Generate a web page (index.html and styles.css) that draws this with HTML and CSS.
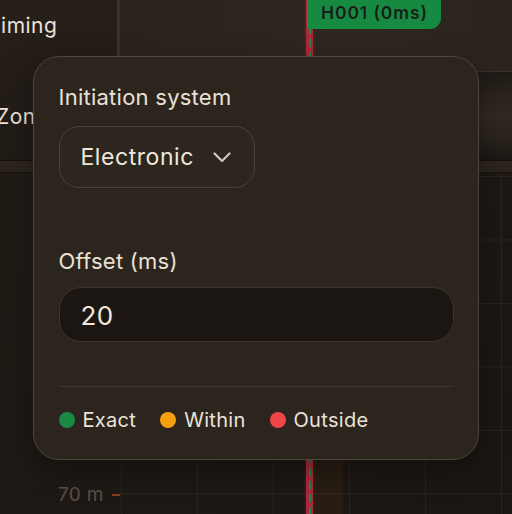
FILE: index.html
```html
<!DOCTYPE html>
<html>
<head>
<meta charset="utf-8">
<link rel="stylesheet" href="styles.css">
</head>
<body>
<div class="app">
  <div class="top">
    <aside class="sidebar">
      <div class="side-item timing">Timing</div>
      <div class="side-item zone">Zone</div>
    </aside>
    <div class="vsep"></div>
    <section class="main-top">
      <div class="toolbar"></div>
      <div class="track"></div>
    </section>
  </div>
  <div class="band"></div>
  <div class="chart">
    <div class="axis">
      <div class="axis-row"><span class="axis-label">70 m</span><span class="tick"></span></div>
    </div>
    <div class="plot"><div class="window"></div></div>
  </div>

  <div class="pole"></div>
  <div class="flag">H001 (0ms)</div>

  <div class="popover">
    <div class="field-label">Initiation system</div>
    <div class="select">
      <span class="select-value">Electronic</span>
      <svg class="chevron" width="18" height="11" viewBox="0 0 18 11"><path d="M1.5 1.5 L9 9 L16.5 1.5" fill="none" stroke="#d2c9bd" stroke-width="2.2" stroke-linecap="round" stroke-linejoin="round"/></svg>
    </div>
    <div class="field-label offset-label">Offset (ms)</div>
    <div class="input"><span class="input-value">20</span></div>
    <div class="divider"></div>
    <div class="legend">
      <span class="legend-item"><span class="dot green"></span>Exact</span>
      <span class="legend-item"><span class="dot orange"></span>Within</span>
      <span class="legend-item"><span class="dot red"></span>Outside</span>
    </div>
  </div>
</div>
</body>
</html>
```
FILE: styles.css
```css
* { box-sizing: border-box; }
html, body {
  margin: 0;
  padding: 0;
  width: 512px;
  height: 514px;
  overflow: hidden;
  background: #1d1814;
  font-family: Inter, "Noto Sans", sans-serif;
}
.app {
  position: relative;
  width: 512px;
  height: 514px;
  display: grid;
  grid-template-rows: 161px 12px 1fr;
  overflow: hidden;
}
.top {
  display: grid;
  grid-template-columns: 117px 3px 1fr;
  border-bottom: 1px solid #15110e;
}
.sidebar {
  background: linear-gradient(180deg, #261f1a 0%, #211b16 100%);
  display: flex;
  flex-direction: column;
  padding-top: 14px;
  overflow: hidden;
}
.side-item {
  font-size: 21px;
  line-height: 24px;
  color: #ebe3d8;
  letter-spacing: 0.5px;
  white-space: nowrap;
}
.timing { margin-left: -13px; }
.zone { margin-left: -4px; margin-top: 67px; }
.vsep { background: #3a3129; }
.main-top {
  display: grid;
  grid-template-rows: 72px 1fr;
}
.toolbar {
  background: linear-gradient(90deg, #2a231d 0%, #2e2720 60%, #2b241e 100%);
  border-bottom: 1px solid #3a3229;
}
.track {
  background: linear-gradient(180deg, #1f1a15 0%, #2a231d 25%, #312922 50%, #29221c 78%, #1c1713 100%);
}
.band {
  background: #2c251e;
  border-bottom: 1px solid #17120f;
}
.chart {
  display: grid;
  grid-template-columns: 120px 1fr;
  background: linear-gradient(135deg, #211b16 0%, #1d1814 60%, #1b1612 100%);
}
.axis {
  padding-top: 290px;
  display: flex;
  flex-direction: column;
}
.axis-row {
  height: 63.5px;
  display: flex;
  align-items: center;
  padding-left: 58px;
}
.axis-label {
  font-size: 19px;
  color: #5a5048;
  width: 54px;
  letter-spacing: 0.3px;
}
.tick {
  width: 8px;
  height: 1.5px;
  background: #8a3c17;
}
.plot {
  position: relative;
  background-image:
    linear-gradient(to right, #2b241e 1px, transparent 1px),
    linear-gradient(to bottom, #2b241e 1px, transparent 1px);
  background-size: 76px 63.5px;
  background-position: 1px 3px;
}
.window {
  position: absolute;
  left: 193px;
  top: 0;
  bottom: 0;
  width: 30px;
  background: rgba(180, 110, 30, 0.07);
}
.pole {
  position: absolute;
  left: 306px;
  top: 0;
  width: 7px;
  height: 514px;
  background: #a82a3a;
  box-shadow: 0 0 4px rgba(200, 40, 60, 0.35);
}
.pole::after {
  content: "";
  position: absolute;
  left: 2.5px;
  top: 0;
  bottom: 0;
  width: 2.5px;
  background: repeating-linear-gradient(180deg, #1a8a45 0 8px, transparent 8px 13px);
}
.flag {
  position: absolute;
  left: 307px;
  top: 0;
  height: 29px;
  padding: 0 13px 0 14px;
  background: #178a42;
  border-bottom-right-radius: 11px;
  color: #1a1d19;
  font-size: 17.5px;
  font-weight: 600;
  line-height: 26px;
  letter-spacing: 0.9px;
  white-space: nowrap;
}
.popover {
  position: absolute;
  left: 33px;
  top: 56px;
  width: 446px;
  height: 404px;
  background: #2c251e;
  border: 1.5px solid #4d453c;
  border-radius: 26px;
  padding: 26.5px 24.5px 0 24.5px;
  display: flex;
  flex-direction: column;
  align-items: flex-start;
  box-shadow: 0 10px 30px rgba(0, 0, 0, 0.35);
}
.field-label {
  font-size: 22px;
  line-height: 26px;
  color: #e9e1d5;
  letter-spacing: 0.25px;
}
.select {
  margin-top: 16px;
  height: 62px;
  display: flex;
  align-items: center;
  gap: 19px;
  padding: 0 23px 0 21px;
  border: 1.5px solid #4a4239;
  border-radius: 20px;
  background: #2d261f;
}
.select-value {
  font-size: 23px;
  letter-spacing: 0.55px;
  color: #efe7db;
}
.chevron { margin-top: 2px; }
.offset-label { margin-top: 60px; }
.input {
  margin-top: 13px;
  width: 100%;
  height: 55px;
  display: flex;
  align-items: center;
  padding-left: 21px;
  padding-top: 3px;
  background: #1b1612;
  border: 1.5px solid #3b342c;
  border-radius: 22px;
}
.input-value {
  font-size: 26px;
  letter-spacing: 0.3px;
  color: #f0e8dc;
}
.divider {
  margin-top: 44px;
  width: 100%;
  height: 1.5px;
  background: #3e362e;
}
.legend {
  margin-top: 20.5px;
  display: flex;
  gap: 24px;
  font-size: 20px;
  line-height: 24px;
  color: #ebe3d7;
  letter-spacing: 0.3px;
}
.legend-item {
  display: flex;
  align-items: center;
  gap: 8px;
}
.dot {
  width: 16px;
  height: 16px;
  border-radius: 50%;
}
.green { background: #188a43; }
.orange { background: #f4a00e; }
.red { background: #ef4546; }
```
